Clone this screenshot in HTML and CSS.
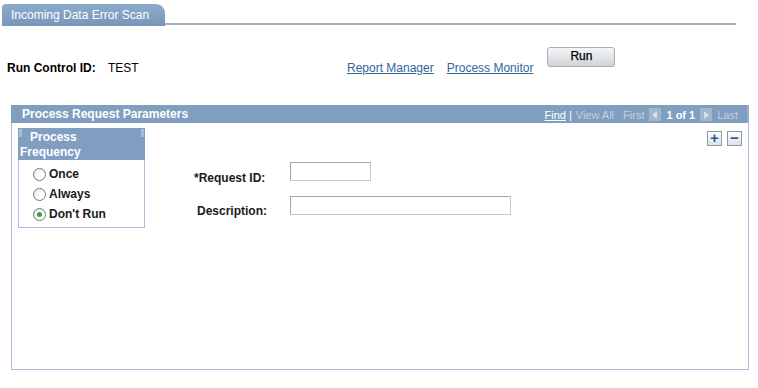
FILE: index.html
```html
<!DOCTYPE html>
<html>
<head>
<meta charset="utf-8">
<link rel="stylesheet" href="styles.css">
</head>
<body>
<div class="tabbar">
  <div class="tab">Incoming Data Error Scan</div>
  <div class="tabline"></div>
</div>
<div class="toprow">
  <span class="rc-label">Run Control ID:</span>
  <span class="rc-value">TEST</span>
  <a class="link" href="#">Report Manager</a>
  <a class="link link2" href="#">Process Monitor</a>
  <button class="runbtn">Run</button>
</div>
<div class="group">
  <div class="group-head">
    <span class="group-title">Process Request Parameters</span>
    <div class="nav">
      <a class="find" href="#">Find</a>
      <span class="sep">|</span>
      <span class="dim">View All</span>
      <span class="dim first">First</span>
      <span class="arrow left"></span>
      <span class="count">1 of 1</span>
      <span class="arrow right"></span>
      <span class="dim">Last</span>
    </div>
  </div>
  <div class="group-body">
    <div class="freq">
      <div class="freq-head"><span class="freq-title">Process Frequency</span></div>
      <div class="freq-list">
        <div class="opt"><span class="radio"></span>Once</div>
        <div class="opt"><span class="radio"></span>Always</div>
        <div class="opt"><span class="radio checked"></span>Don't Run</div>
      </div>
    </div>
    <div class="fields">
      <div class="frow">
        <span class="flabel">*Request ID:</span>
        <span class="input short"></span>
      </div>
      <div class="frow">
        <span class="flabel desc">Description:</span>
        <span class="input long"></span>
      </div>
    </div>
    <div class="pm">
      <span class="pmbtn">+</span>
      <span class="pmbtn">&minus;</span>
    </div>
  </div>
</div>
</body>
</html>
```

FILE: styles.css
```css
html, body {
  margin: 0;
  padding: 0;
  background: #fff;
}
body {
  font-family: "Liberation Sans", Arial, sans-serif;
  font-size: 12px;
  color: #000;
  width: 758px;
  height: 388px;
  overflow: hidden;
}
.tabbar {
  display: flex;
  align-items: flex-end;
  padding: 4px 22px 0 2px;
}
.tab {
  width: 163px;
  height: 22px;
  box-sizing: border-box;
  padding: 4px 0 0 9px;
  line-height: 14px;
  color: #fff;
  background: linear-gradient(#8dabcb, #7896b7);
  border-radius: 4px 9px 0 0;
  white-space: nowrap;
}
.tabline {
  flex: 1;
  border-bottom: 2px solid #a3adb8;
  margin-bottom: 1px;
}
.toprow {
  display: flex;
  align-items: flex-start;
  margin-top: 21px;
  padding-left: 7px;
  height: 20px;
}
.rc-label, .rc-value, .link {
  margin-top: 14px;
  line-height: 14px;
}
.rc-label {
  font-weight: bold;
  width: 101px;
}
.rc-value {
  width: 239px;
}
.link {
  color: #336699;
  text-decoration: underline;
}
.link2 {
  margin-left: 13px;
}
.runbtn {
  margin-left: 14px;
  width: 68px;
  height: 20px;
  padding: 0;
  font-family: "Liberation Sans", Arial, sans-serif;
  font-size: 12px;
  color: #000;
  border: 1px solid #a9acb0;
  border-radius: 3px;
  background: linear-gradient(#f4f5f6, #dfe2e6 60%, #cfd3d8);
  line-height: 14px;
  padding-bottom: 3px;
  -webkit-text-stroke: 0.25px #000;
}
.group {
  margin: 38px 0 0 11px;
  width: 738px;
  height: 265px;
  box-sizing: border-box;
  border: 1px solid #a6bedb;
  border-top: none;
}
.group-head {
  height: 18px;
  margin: 0 -1px;
  background: #7f9ec0;
  display: flex;
  align-items: center;
  padding: 0 9px 0 11px;
  color: #fff;
  border-right: 2px solid #95aecb;
}
.group-title {
  font-weight: bold;
  font-size: 12px;
  line-height: 14px;
}
.nav {
  margin-left: auto;
  display: flex;
  align-items: center;
  font-size: 11px;
  line-height: 13px;
  padding-top: 3px;
}
.find {
  color: #fff;
  text-decoration: underline;
}
.sep {
  color: #fff;
  margin: 0 4px 0 3px;
}
.dim {
  color: #c4cfdc;
}
.first {
  margin-left: 9px;
}
.arrow {
  width: 12px;
  height: 13px;
  background: #a5b5c8;
  margin: -2px 5px 0 5px;
  position: relative;
}
.arrow::after {
  content: "";
  position: absolute;
  top: 3px;
  border-top: 4px solid transparent;
  border-bottom: 4px solid transparent;
}
.arrow.left::after {
  left: 3px;
  border-right: 5px solid #d7e0ea;
}
.arrow.right::after {
  left: 4px;
  border-left: 5px solid #d7e0ea;
}
.count {
  font-weight: bold;
  color: #fff;
}
.group-body {
  display: flex;
  align-items: flex-start;
  padding: 5px 6px 0 6px;
}
.freq {
  width: 127px;
  height: 100px;
  box-sizing: border-box;
  border: 1px solid #a6bedb;
}
.freq-head {
  margin: -1px -1px 0 -1px;
  height: 32px;
  box-sizing: border-box;
  padding: 2px 2px 0 2px;
  background: #7f9ec0;
  color: #fff;
  font-weight: bold;
  line-height: 15px;
  position: relative;
}
.freq-title {
  display: block;
  width: 75px;
  text-indent: 10px;
}
.freq-head::before, .freq-head::after {
  content: "";
  position: absolute;
  top: 1px;
  width: 3px;
  height: 8px;
  background: #a8bcd2;
}
.freq-head::before {
  left: 1px;
}
.freq-head::after {
  right: 1px;
}
.freq-list {
  padding: 4px 0 0 14px;
}
.opt {
  display: flex;
  align-items: center;
  height: 20px;
  font-weight: bold;
  color: #1a1a1a;
}
.radio {
  width: 13px;
  height: 13px;
  box-sizing: border-box;
  border-radius: 50%;
  border: 1px solid #6c7884;
  background: radial-gradient(circle at 65% 65%, #ffffff 30%, #dfe3e8 100%);
  margin-right: 3px;
  position: relative;
}
.radio.checked::after {
  content: "";
  position: absolute;
  left: 3px;
  top: 3px;
  width: 5px;
  height: 5px;
  border-radius: 50%;
  background: #3aa43c;
}
.fields {
  margin: 34px 0 0 49px;
}
.frow {
  display: flex;
  align-items: flex-start;
  height: 19px;
  margin-bottom: 15px;
}
.flabel {
  width: 96px;
  font-weight: bold;
  line-height: 14px;
  padding-top: 9px;
  color: #1a1a1a;
}
.flabel.desc {
  padding-left: 3px;
  width: 93px;
  padding-top: 8px;
}
.input {
  height: 19px;
  box-sizing: border-box;
  border: 1px solid #a5a5a5;
  border-right-color: #c8c8c8;
  border-bottom-color: #c8c8c8;
  background: #fff;
}
.input.short {
  width: 81px;
}
.input.long {
  width: 221px;
}
.pm {
  margin-left: auto;
  margin-top: 3px;
  display: flex;
  gap: 5px;
}
.pmbtn {
  width: 15px;
  height: 15px;
  box-sizing: border-box;
  border: 1px solid #8d9aa6;
  background: linear-gradient(#ffffff, #dbe2ea);
  color: #1e5aa0;
  font-weight: bold;
  font-size: 15px;
  line-height: 12px;
  text-align: center;
}
```
